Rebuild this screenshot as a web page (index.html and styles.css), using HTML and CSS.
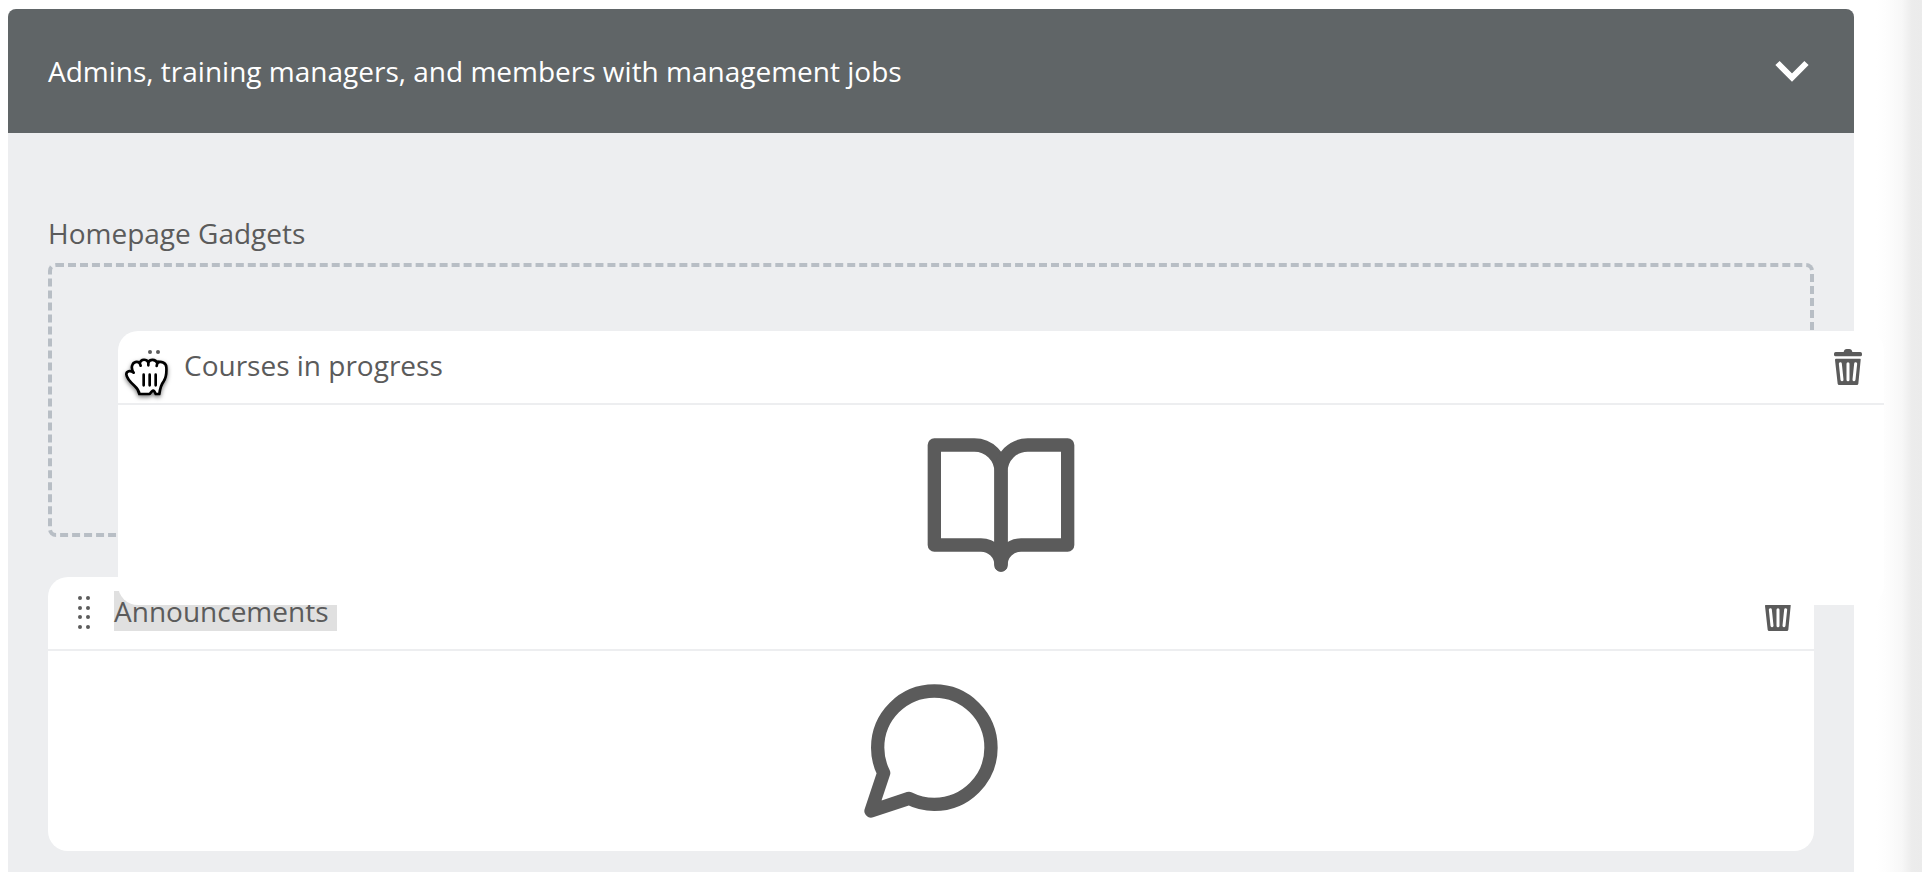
FILE: index.html
```html
<!DOCTYPE html>
<html lang="en">
<head>
    <meta charset="UTF-8">
    <meta name="viewport" content="width=device-width, initial-scale=1.0">
    <title>Homepage Gadgets</title>
    <link rel="stylesheet" href="styles.css">
</head>
<body>
    <!-- Shared icons -->
    <svg class="sprite" aria-hidden="true">
        <symbol id="icon-trash" viewBox="0 0 84 108">
            <path fill="currentColor" d="M5 9h24c1-6 4-9 9-9h8c5 0 8 3 9 9h24a5 5 0 0 1 5 5v3a5 5 0 0 1-5 5H5a5 5 0 0 1-5-5v-3a5 5 0 0 1 5-5z"/>
            <path fill="currentColor" d="M6 29h72q3 0 2 4l-7 71q-1 4-4 4H15q-3 0-4-4L3 33q0-4 3-4z"/>
            <path stroke="#fff" stroke-width="9" stroke-linecap="round" d="M19 44l5 48M42 44v48M65 44l-5 48"/>
        </symbol>
        <symbol id="icon-dots" viewBox="0 0 16 40">
            <g fill="currentColor">
                <circle cx="4" cy="7" r="2"/><circle cx="12" cy="7" r="2"/>
                <circle cx="4" cy="17" r="2"/><circle cx="12" cy="17" r="2"/>
                <circle cx="4" cy="26" r="2"/><circle cx="12" cy="26" r="2"/>
                <circle cx="4" cy="36" r="2"/><circle cx="12" cy="36" r="2"/>
            </g>
        </symbol>
    </svg>

    <main class="panel">
        <button class="panel-header" type="button" aria-expanded="true">
            <span>Admins, training managers, and members with management jobs</span>
            <svg class="chevron" viewBox="0 0 44 44" aria-hidden="true">
                <path d="M7.5 14L22 28.500l14.500-14.500"/>
            </svg>
        </button>

        <section class="panel-body" aria-labelledby="gadgets-label">
            <h2 class="label" id="gadgets-label">Homepage Gadgets</h2>

            <div class="gadgets">
                <div class="drop-zone">
                    <article class="gadget dragging">
                        <header class="gadget-head">
                            <button class="handle" type="button" aria-label="Move Courses in progress">
                                <svg class="dots"><use href="#icon-dots"/></svg>
                            </button>
                            <h3 class="gadget-title">Courses in progress</h3>
                            <button class="delete" type="button" aria-label="Delete Courses in progress">
                                <svg class="trash"><use href="#icon-trash"/></svg>
                            </button>
                        </header>
                        <div class="gadget-body">
                            <svg class="gadget-icon" viewBox="0 0 24 24" aria-hidden="true">
                                <path d="M2 3h6a4 4 0 0 1 4 4v14a3 3 0 0 0-3-3H2z"/>
                                <path d="M22 3h-6a4 4 0 0 0-4 4v14a3 3 0 0 1 3-3h7z"/>
                            </svg>
                        </div>
                        <svg class="grab-hand" viewBox="72 81 135 120" aria-hidden="true">
                            <path class="hand" d="M101 128C97 122 94 112 97 105C100 96 111 93 119 99C123 87 139 86 145 97C150 87 166 87 172 99C182 92 199 98 199 112C200 128 198 144 191 154C183 164 180 176 178 192L167 192C164 184 161 181 158 182C153 184 151 192 148 192L118 192C117 182 113 176 104 168C92 157 80 146 79 133C79 124 90 119 101 128z"/>
                            <path class="lines" d="M119 99l3 8M145 97v9M172 99l-2 9M131 134v32M149 134v32M167 134v32"/>
                        </svg>
                    </article>
                </div>

                <article class="gadget">
                    <header class="gadget-head">
                        <button class="handle" type="button" aria-label="Move Announcements">
                            <svg class="dots"><use href="#icon-dots"/></svg>
                        </button>
                        <h3 class="gadget-title selected">Announcements</h3>
                        <button class="delete" type="button" aria-label="Delete Announcements">
                            <svg class="trash"><use href="#icon-trash"/></svg>
                        </button>
                    </header>
                    <div class="gadget-body">
                        <svg class="gadget-icon" viewBox="0 0 24 24" aria-hidden="true">
                            <path d="M21 11.5a8.5 8.5 0 0 1-8.5 8.5 8.38 8.38 0 0 1-3.8-.9L3 21l1.9-5.7a8.38 8.38 0 0 1-.9-3.8 8.5 8.5 0 0 1 17 0z"/>
                        </svg>
                    </div>
                </article>
            </div>
        </section>
    </main>
</body>
</html>
```

FILE: styles.css
```css
* {
    box-sizing: border-box;
}

body {
    display: flex;
    min-height: 100vh;
    margin: 0;
    padding: 9px 68px 0 8px;
    overflow-x: hidden;
    font-family: "Open Sans", sans-serif;
    font-size: 28px;
    line-height: 40px;
    color: #5b5b5b;
    background: linear-gradient(to left, #ebebeb 0, #ececec 10px, #f7f7f7 20px, #fdfdfd 36px, #fff 46px);
}

button {
    padding: 0;
    border: none;
    background: none;
    font: inherit;
    color: inherit;
    cursor: pointer;
}

h2, h3 {
    margin: 0;
    font-size: inherit;
    font-weight: 400;
}

svg {
    display: block;
}

.sprite {
    position: absolute;
    width: 0;
    height: 0;
}

.panel {
    display: flex;
    flex: 1;
    flex-direction: column;
    min-width: 0;
    border-radius: 8px 8px 0 0;
    background-color: #edeef0;
}

.panel-header {
    display: flex;
    align-items: center;
    justify-content: space-between;
    padding: 40px;
    border-radius: 8px 8px 0 0;
    background-color: #606567;
    color: #fff;
    text-align: left;
}

.chevron {
    flex: none;
    width: 44px;
    height: 44px;
    fill: none;
    stroke: #fff;
    stroke-width: 6;
}

.panel-body {
    padding: 80px 40px 20px;
}

.label {
    margin-bottom: 10px;
}

/* equal rows, so the empty slot is as tall as a card */
.gadgets {
    display: grid;
    grid-auto-rows: 1fr;
    gap: 40px;
}

.drop-zone {
    position: relative;
    border: 4px dashed #b8bec5;
    border-radius: 8px;
}

.gadget {
    border-radius: 20px;
    background-color: #fff;
}

.dragging {
    position: absolute;
    top: 64px;
    left: 66px;
    z-index: 1;
    width: calc(100% + 8px);
}

.gadget-head {
    display: flex;
    align-items: flex-end;
    padding: 14px 22px 18px 28px;
    border-bottom: 2px solid #edeef0;
}

.handle {
    margin-right: 22px;
    cursor: grab;
}

.dots {
    width: 16px;
    height: 40px;
}

.selected {
    padding-right: 8px;
    background-color: #e0e0e0;
}

.delete {
    margin-left: auto;
}

.trash {
    width: 28px;
    height: 36px;
}

.gadget-body {
    display: flex;
    justify-content: center;
    padding: 20px;
}

.gadget-icon {
    width: 160px;
    height: 160px;
    fill: none;
    stroke: currentColor;
    stroke-width: 2;
    stroke-linecap: round;
    stroke-linejoin: round;
}

.grab-hand {
    position: absolute;
    top: 26px;
    left: 6px;
    width: 45px;
    height: 40px;
    overflow: visible;
    filter: drop-shadow(0 2px 2px rgba(0, 0, 0, 0.5));
    stroke: #000;
    stroke-width: 8;
    stroke-linecap: round;
    stroke-linejoin: round;
}

.hand {
    fill: #fff;
}

.lines {
    fill: none;
}
```
